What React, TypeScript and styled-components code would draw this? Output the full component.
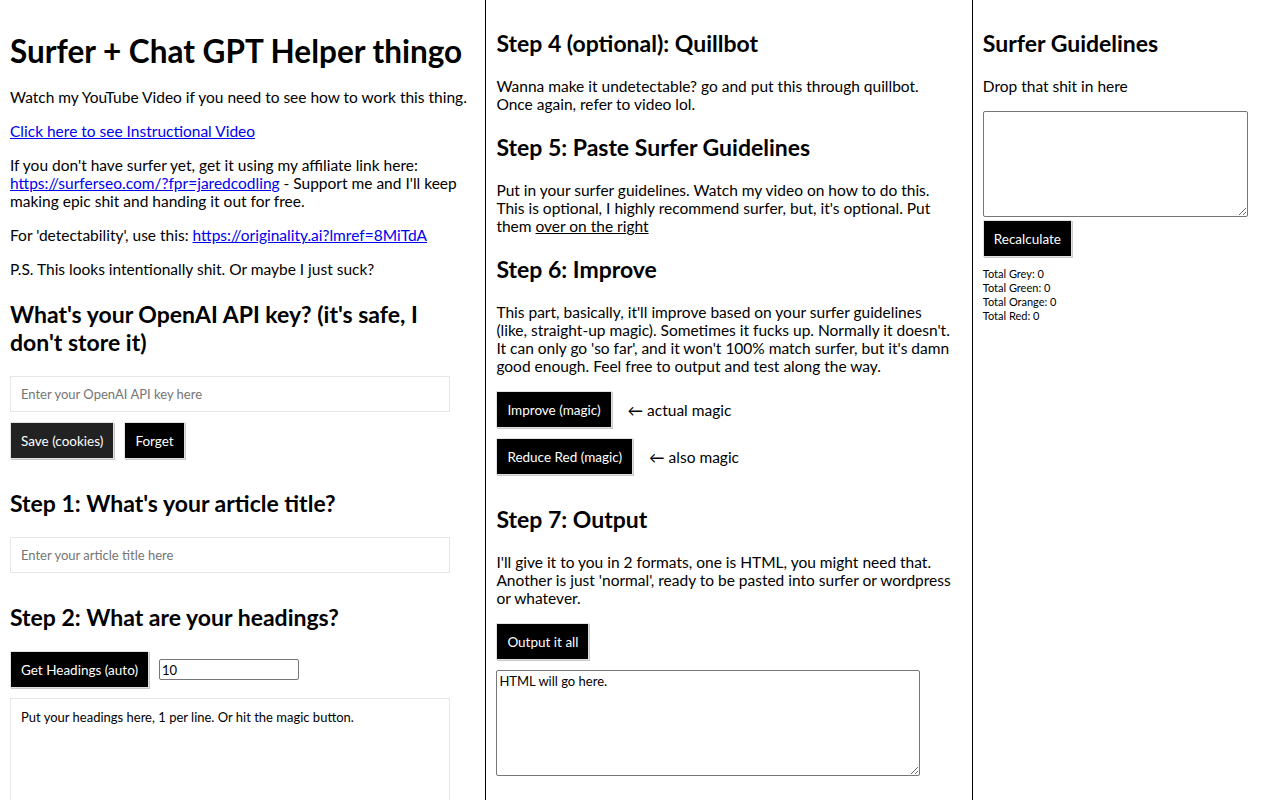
import React from 'react';
import styled, { createGlobalStyle } from 'styled-components';

const GlobalStyle = createGlobalStyle`
    body {
        margin: 0;
        font-family: Lato, "Liberation Sans", sans-serif;
        color: #000;
        background: #fff;
    }
`

const Layout = styled.div`
    display: flex;
    align-items: stretch;
    min-height: 100vh;
`

const Column = styled.section<{ $width: string; $divider?: boolean }>`
    width: ${(p) => p.$width};
    box-sizing: border-box;
    padding: 10px;
    border-right: ${(p) => (p.$divider ? '1px solid #000' : 'none')};
`

const Title = styled.h1`
    font-size: 31.5px;
    font-weight: 700;
    line-height: 38px;
    margin: 22px 0 18px;
`

const Heading = styled.h2<{ $top?: number }>`
    font-size: 23px;
    font-weight: 700;
    line-height: 28px;
    margin: ${(p) => (p.$top ?? 30)}px 0 20px;
`

const Text = styled.p`
    font-size: 15.5px;
    line-height: 18px;
    margin: 16px 0;
`

const Link = styled.a`
    color: #0000ee;
    text-decoration: underline;
`

const Under = styled.span`
    text-decoration: underline;
`

const TextInput = styled.input`
    display: block;
    width: 440px;
    height: 36px;
    box-sizing: border-box;
    border: 1px solid #e6e6e6;
    padding: 0 10px;
    font-family: inherit;
    font-size: 13px;
    margin: 0 0 10px;
    &::placeholder {
        color: #757575;
    }
`

const NumberInput = styled.input`
    width: 140px;
    height: 21px;
    box-sizing: border-box;
    border: 1px solid #767676;
    border-radius: 2px;
    padding: 0 2px;
    font-family: inherit;
    font-size: 13px;
`

const SoftArea = styled.textarea`
    display: block;
    width: 440px;
    height: 120px;
    box-sizing: border-box;
    border: 1px solid #e6e6e6;
    padding: 10px;
    font-family: inherit;
    font-size: 13px;
    resize: none;
`

const PlainArea = styled.textarea<{ $w: number; $h: number }>`
    display: block;
    width: ${(p) => p.$w}px;
    height: ${(p) => p.$h}px;
    box-sizing: border-box;
    border: 1px solid #767676;
    border-radius: 2px;
    padding: 2px;
    font-family: inherit;
    font-size: 13px;
    margin: 0;
`

const ButtonRow = styled.div<{ $gap?: number; $top?: number }>`
    display: flex;
    align-items: center;
    gap: ${(p) => p.$gap ?? 10}px;
    margin: ${(p) => p.$top ?? 0}px 0 10px;
`

const Button = styled.button<{ $tone?: 'dark' | 'black' }>`
    height: 37px;
    padding: 0 10px;
    background: ${(p) => (p.$tone === 'dark' ? '#222' : '#000')};
    color: #fff;
    border: 1px solid #e2e2e2;
    box-shadow: 1px 1px 0 #c8c8c8;
    font-family: inherit;
    font-size: 13.5px;
    cursor: pointer;
`

const Note = styled.span`
    font-size: 15.5px;
`

const Totals = styled.div`
    font-size: 11px;
    line-height: 14px;
    margin-top: 10px;
`

const App = () => {
    return (
        <>
            <GlobalStyle />
            <Layout>
                <Column $width="38%" $divider>
                    <Title>Surfer + Chat GPT Helper thingo</Title>
                    <Text>Watch my YouTube Video if you need to see how to work this thing.</Text>
                    <Text><Link href="#">Click here to see Instructional Video</Link></Text>
                    <Text>
                        If you don't have surfer yet, get it using my affiliate link here:{' '}
                        <Link href="#">https://surferseo.com/?fpr=jaredcodling</Link> - Support me and I'll keep making epic shit and handing it out for free.
                    </Text>
                    <Text>For 'detectability', use this: <Link href="#">https://originality.ai?lmref=8MiTdA</Link></Text>
                    <Text>P.S. This looks intentionally shit. Or maybe I just suck?</Text>
                    <Heading $top={22}>What's your OpenAI API key? (it's safe, I don't store it)</Heading>
                    <TextInput placeholder="Enter your OpenAI API key here" />
                    <ButtonRow>
                        <Button $tone="dark">Save (cookies)</Button>
                        <Button>Forget</Button>
                    </ButtonRow>
                    <Heading>Step 1: What's your article title?</Heading>
                    <TextInput placeholder="Enter your article title here" />
                    <Heading>Step 2: What are your headings?</Heading>
                    <ButtonRow>
                        <Button>Get Headings (auto)</Button>
                        <NumberInput type="number" defaultValue={10} />
                    </ButtonRow>
                    <SoftArea defaultValue="Put your headings here, 1 per line. Or hit the magic button." />
                </Column>
                <Column $width="38%" $divider>
                    <Heading $top={19}>Step 4 (optional): Quillbot</Heading>
                    <Text>
                        Wanna make it undetectable? go and put this through quillbot.<br />
                        Once again, refer to video lol.
                    </Text>
                    <Heading $top={20}>Step 5: Paste Surfer Guidelines</Heading>
                    <Text>
                        Put in your surfer guidelines. Watch my video on how to do this.<br />
                        This is optional, I highly recommend surfer, but, it's optional. Put<br />
                        them <Under>over on the right</Under>
                    </Text>
                    <Heading $top={20}>Step 6: Improve</Heading>
                    <Text>
                        This part, basically, it'll improve based on your surfer guidelines<br />
                        (like, straight-up magic). Sometimes it fucks up. Normally it doesn't.<br />
                        It can only go 'so far', and it won't 100% match surfer, but it's damn<br />
                        good enough. Feel free to output and test along the way.
                    </Text>
                    <ButtonRow $gap={16}>
                        <Button>Improve (magic)</Button>
                        <Note>← actual magic</Note>
                    </ButtonRow>
                    <ButtonRow $gap={16}>
                        <Button>Reduce Red (magic)</Button>
                        <Note>← also magic</Note>
                    </ButtonRow>
                    <Heading>Step 7: Output</Heading>
                    <Text>I'll give it to you in 2 formats, one is HTML, you might need that. Another is just 'normal', ready to be pasted into surfer or wordpress or whatever.</Text>
                    <ButtonRow>
                        <Button>Output it all</Button>
                    </ButtonRow>
                    <PlainArea $w={424} $h={106} defaultValue="HTML will go here." />
                </Column>
                <Column $width="24%">
                    <Heading $top={19}>Surfer Guidelines</Heading>
                    <Text>Drop that shit in here</Text>
                    <PlainArea $w={265} $h={106} />
                    <ButtonRow $top={3}>
                        <Button>Recalculate</Button>
                    </ButtonRow>
                    <Totals>
                        <div>Total Grey: 0</div>
                        <div>Total Green: 0</div>
                        <div>Total Orange: 0</div>
                        <div>Total Red: 0</div>
                    </Totals>
                </Column>
            </Layout>
        </>
    )
}

export default App
